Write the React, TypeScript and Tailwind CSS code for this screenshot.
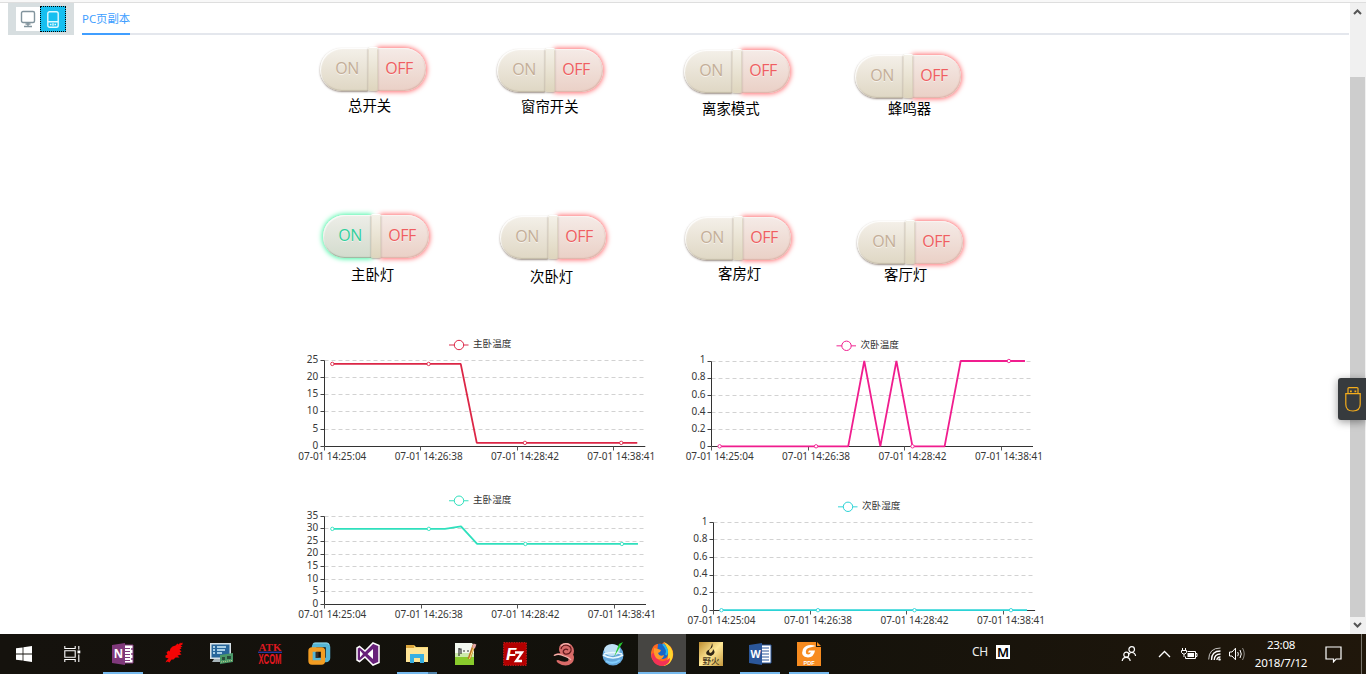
import React from 'react';

type SwitchProps = {
  label: string;
  on?: boolean;
  place: string;
  labelPlace: string;
};

function PillSwitch({ label, on = false, place, labelPlace }: SwitchProps) {
  return (
    <div className={`flex w-[107px] shrink-0 flex-col ${place}`}>
      <div className="flex h-[43px] w-[106px] items-stretch font-['Open_Sans','Noto_Sans',sans-serif] text-[16px] leading-none tracking-[-0.5px]">
        <div
          className={
            on
              ? 'flex w-[48px] items-center justify-center rounded-l-[22px] bg-linear-to-b from-[#edeee8] to-[#d3dbcd] pb-[3px] pl-[6px] text-[#32cf9c] shadow-[0_0_5px_1px_#46f5a5,inset_1px_1px_1px_#ffffffb0,inset_0_-1px_1px_#9eb5a0]'
              : 'flex w-[48px] items-center justify-center rounded-l-[22px] bg-linear-to-b from-[#f4f0e9] to-[#dfd7c4] pb-[3px] pl-[6px] text-[#c4ae98] shadow-[0_1px_2px_#6b594db0,inset_1px_1px_1px_#fffffff0,inset_0_-1px_1px_#aaa08c80]'
          }
        >
          <span className="[text-shadow:0_1px_0_#ffffffa0]">ON</span>
        </div>
        <div className="z-10 -mt-px h-[44px] w-[10px] rounded-[2px] bg-linear-to-b from-[#f5f2ea] to-[#ded5bd] shadow-[0_1px_2px_#8b7c70a0,inset_0_1px_0_#ffffff,inset_1px_0_0_#d5ccbb80,inset_-1px_0_0_#cfc4b080]" />
        <div className="flex w-[48px] items-center justify-center rounded-r-[22px] bg-linear-to-b from-[#f5ebe7] to-[#ead0c6] pr-[6px] pb-[3px] text-[#ef5e61] shadow-[0_0_5px_1px_#ff6e71,inset_0_1px_1px_#ffffff80,inset_-1px_-1px_1px_#d69a9080]">
          <span className="[text-shadow:0_1px_0_#ffffff90]">OFF</span>
        </div>
      </div>
      <div className={`h-5 text-[14.4px] leading-5 whitespace-nowrap text-black ${labelPlace}`}>{label}</div>
    </div>
  );
}

type ChartProps = {
  name: string;
  color: string;
  height: number;
  x: number;
  top: number;
  bottom: number;
  width: number;
  max: number;
  ticks: string[];
  values: number[];
  legendX: number;
  legendY: number;
};

const TIMES = ['07-01 14:25:04', '07-01 14:26:38', '07-01 14:28:42', '07-01 14:38:41'];

function LineChart(p: ChartProps) {
  const step = p.width / 20;
  const px = (i: number) => p.x + step * (i + 0.5);
  const py = (v: number) => p.bottom - ((p.bottom - p.top) * v) / p.max;
  const snap = (n: number) => Math.round(n - 0.5) + 0.5;
  const axisX = snap(p.x);
  const axisY = snap(p.bottom);
  return (
    <svg width={370} height={p.height} className="block shrink-0 overflow-visible">
      {p.ticks.map((t) => {
        const y = snap(py(Number(t)));
        return (
          <g key={t}>
            {t !== '0' && <line x1={axisX} x2={p.x + p.width} y1={y} y2={y} stroke="#d2d2d2" strokeDasharray="4 3" />}
            <line x1={axisX - 4} x2={axisX} y1={y} y2={y} stroke="#444" />
            <text x={p.x - 6} y={py(Number(t)) + 2.4} textAnchor="end" fontSize="10" fill="#383838">{t}</text>
          </g>
        );
      })}
      <line x1={axisX} x2={axisX} y1={snap(p.top)} y2={axisY} stroke="#333" />
      <line x1={axisX} x2={p.x + p.width} y1={axisY} y2={axisY} stroke="#333" />
      {TIMES.map((t, i) => (
        <g key={t}>
          <line x1={snap(p.x + step * 6 * i + 0.3)} x2={snap(p.x + step * 6 * i + 0.3)} y1={axisY} y2={axisY + 4} stroke="#555" />
          <text x={px(i * 6)} y={p.bottom + 13.4} textAnchor="middle" fontSize="10" textLength="68" fill="#383838">{t}</text>
        </g>
      ))}
      <polyline
        points={p.values.map((v, i) => `${px(i)},${py(v)}`).join(' ')}
        fill="none"
        stroke={p.color}
        strokeWidth="1.8"
        strokeLinejoin="bevel"
      />
      {[0, 6, 12, 18].map((i) => (
        <circle key={i} cx={px(i)} cy={py(p.values[i])} r="1.7" fill="#fff" stroke={p.color} strokeWidth="0.9" />
      ))}
      <line x1={p.legendX - 10} x2={p.legendX + 9.5} y1={p.legendY} y2={p.legendY} stroke={p.color} strokeWidth="1.2" opacity="0.8" />
      <circle cx={p.legendX} cy={p.legendY} r="4.7" fill="#fff" stroke={p.color} strokeWidth="1" />
      <text x={p.legendX + 14} y={p.legendY + 2.3} fontSize="9.6" fill="#333">{p.name}</text>
    </svg>
  );
}

const fill = (n: number, v: number) => Array<number>(n).fill(v);
const UNIT_TICKS = ['0', '0.2', '0.4', '0.6', '0.8', '1'];

function Slot({ children, state = 'idle' }: { children: React.ReactNode; state?: 'idle' | 'open' | 'active' | 'multi' }) {
  return (
    <div className={state === 'active' ? 'ml-px flex h-10 w-[48px] flex-col items-center bg-[#464542]' : 'flex h-10 w-[49px] flex-col items-center'}>
      <div className="flex h-[38px] items-center pt-[2px]">
        <svg width="24" height="24" viewBox="0 0 24 24" className="overflow-visible">{children}</svg>
      </div>
      {state === 'open' && <div className="h-[2px] w-10 bg-[#76b9ed]" />}
      {state === 'active' && <div className="h-[2px] w-full bg-[#76b9ed]" />}
      {state === 'multi' && (
        <div className="flex h-[2px] w-10">
          <div className="w-[31px] bg-[#76b9ed]" />
          <div className="w-[9px] bg-[#4f81a8]" />
        </div>
      )}
    </div>
  );
}

function Taskbar() {
  return (
    <div className="flex h-10 w-full shrink-0 bg-linear-to-r from-[#15120d] via-[#12110b] to-[#20170b] text-white">
      <div className="flex h-10 w-12 items-center justify-center">
        <svg width="16" height="16" viewBox="0 0 16 16" fill="#fff">
          <path d="M0 2.3 6.6 1.4V7.5H0zM7.4 1.3 16 0V7.5H7.4zM0 8.4H6.6V14.6L0 13.7zM7.4 8.4H16V16L7.4 14.8z" />
        </svg>
      </div>
      <div className="mr-[2px] flex h-10 w-12 items-center justify-center">
        <svg width="17" height="16" viewBox="0 0 17 16" fill="none" stroke="#fff" strokeWidth="1.1">
          <path d="M.8 0V2.5H11.2V0M.8 16V13.5H11.2V16M.8 4.7H11.2V11.3H.8zM14.8 0V3.5M14.8 8.5V16" />
          <path d="M13.5 4.5h2.8v2.8h-2.8z" fill="#fff" stroke="none" />
        </svg>
      </div>
      <Slot state="open">
        <path d="M12 3h10v18H12z" fill="#fff" stroke="#80397b" />
        <path d="M14 6.5h5M14 9.5h5M14 12.5h5M14 15.5h5M14 18.5h5" stroke="#80397b" strokeWidth="1.2" />
        <path d="M20 7h2M20 12h2M20 17h2" stroke="#80397b" strokeWidth="1.5" />
        <path d="M1 3 14 1V23L1 21z" fill="#80397b" />
        <text x="2.8" y="16" fontSize="11.5" fontWeight="700" fill="#fff">N</text>
      </Slot>
      <Slot>
        <path d="M13 4 15 2 16 3 18 1 18 2 20 1 20 3 18 4 20 5 18 6 19 7 17 8 19 10 17 11 19 13 15 14 17 16 13 16 11 18 9 18 7 21 5 20 3 21 4 19 6 17 3 16 3 14 5 13 4 11 6 9 7 10 8 7 10 5z" fill="#f50505" transform="translate(2.5 -.5)" />
      </Slot>
      <Slot>
        <path d="M1 1h21v16H1z" fill="#d7e1e7" />
        <path d="M2.5 2.5h18v13h-18z" fill="#28669b" />
        <path d="M4 5h2M4 8h2M4 11h2M8 5h9M8 8h8M8 11h5" stroke="#d2f1ff" strokeWidth="1.3" />
        <path d="M5 17h7v3H3z" fill="#a8b5ba" />
        <path d="M11 13 24 11V20L11 22z" fill="#4a9868" />
        <path d="M13 15h3v3h-3zM18 14h4v3h-4z" fill="#294d3b" />
        <path d="M12 20 23 18.5" stroke="#c5d18a" strokeDasharray="1 1" />
      </Slot>
      <Slot>
        <text x="0.5" y="8.5" fontFamily="Liberation Serif" fontSize="10.5" fontWeight="700" textLength="23" lengthAdjust="spacingAndGlyphs" fill="#db1820">ATK</text>
        <path d="M0 10.3h24" stroke="#2438a0" strokeWidth="1.4" />
        <text x="0.5" y="22.4" fontFamily="Liberation Sans" fontSize="14.5" fontWeight="700" textLength="23" lengthAdjust="spacingAndGlyphs" fill="#e31720">XCOM</text>
      </Slot>
      <Slot>
        <rect x="7" y="3" width="14" height="15" rx="2" fill="none" stroke="#55b5d5" strokeWidth="4.5" />
        <path d="M6 2.2Q6 1 8 1H20Q22 1 22 3" fill="none" stroke="#98dbec" />
        <rect x="3.5" y="7.5" width="12.5" height="13" rx="1.5" fill="none" stroke="#f39d22" strokeWidth="4.3" />
        <path d="M8.5 10h3v6h-3z" fill="#392e27" />
      </Slot>
      <Slot>
        <path d="M17 1 23 3.5V20.5L17 23 9 15 3.5 19.5 1 18V6L3.5 4.5 9 9z" fill="#68217a" stroke="#fff" strokeWidth="1.5" />
        <path d="M4 8.5V15.5L7 12zM17 7V17L11.5 12z" fill="#fff" />
      </Slot>
      <Slot state="multi">
        <path d="M1 3H9L11 5H23V20H1z" fill="#f8d978" />
        <path d="M1 3h8v3H1z" fill="#dca63d" />
        <path d="M1 6h22v14H1z" fill="#ffe596" />
        <path d="M5 12h14v9h-4v-5H9v5H5z" fill="#38afe2" />
      </Slot>
      <Slot>
        <path d="M1 1h17l2 3v19H1z" fill="#f3f8ef" />
        <path d="M1 14h19v9H1z" fill="#89cb2c" />
        <path d="M1 11h19v4H1z" fill="#cceaab" />
        <path d="M5 6v8M5 7h2v5M9 9h2M13 9h2" fill="none" stroke="#333" strokeWidth="1.2" />
        <path d="M20 3 15 17" stroke="#bd7427" strokeWidth="3" />
        <path d="M21 2 19.5 6" stroke="#e5a7a7" strokeWidth="3" />
        <path d="M19.5 6 15.5 17" stroke="#ffe37b" strokeWidth="1" />
      </Slot>
      <Slot>
        <path d="M.7 .7H23.3V23.3H.7z" fill="#b30000" stroke="#d51a1a" strokeDasharray="1.5 1" />
        <text x="3" y="17.5" fontFamily="Liberation Sans" fontSize="17" fontStyle="italic" fontWeight="700" fill="#fff">F</text>
        <path d="M12 10.5h7L13 19h6" fill="none" stroke="#fff" strokeWidth="2.3" />
      </Slot>
      <Slot>
        <path d="M1 14Q4 10 9 12Q12 14 15 15Q22 15 22 9Q21 1 14 1Q7 1 7 7Q7 11 11 13Q3 12 1 14z" fill="#d56b69" />
        <path d="M1 14Q9 11 13 14Q18 16 16 19Q12 21 6 18Q3 18 6 21Q14 26 20 21Q24 16 20 11L11 10z" fill="#d96b68" />
        <path d="M9 7Q10 3 14 3Q20 4 19 9Q17 13 13 12Q10 10 12 8Q14 6 16 8" fill="none" stroke="#61191c" strokeWidth="1.2" />
        <path d="M2 13.5Q7 11 12 14Q18 16 19 18M9 4Q13 0 18 3" fill="none" stroke="#f5b5af" strokeWidth="1.2" />
      </Slot>
      <Slot>
        <circle cx="12" cy="13" r="10.5" fill="#65a8dc" />
        <ellipse cx="11" cy="8" rx="8" ry="6" fill="#bfe0f5" />
        <path d="M2 13Q12 19 22 13M3 12Q12 9 21 12" fill="none" stroke="#eaf8ff" strokeWidth="1.5" />
        <path d="M5 19Q12 23 19 18" fill="none" stroke="#82ceff" strokeWidth="2" />
        <path d="M18 2 22 0 13 15z" fill="#27cc32" />
      </Slot>
      <Slot state="active">
        <path d="M12 2Q4 1 2 7Q0 12 2 17Q6 24 13 24Q21 22 23 15Q24 8 20 4L14 0z" fill="#ff6821" />
        <path d="M14 0Q23 4 23 13Q22 23 13 24Q18 20 18 14Q18 6 14 0z" fill="#ffd52d" />
        <path d="M1.5 12Q2 24 13 24Q20 22 20 16Q16 20 11 19Q5 17 4 11z" fill="#f33156" />
        <path d="M8 2Q16 0 18 9Q19 16 13 17Q8 17 7 12z" fill="#1767c9" />
        <path d="M4 6L8 7 11 8 10 10 8 11Q9 15 14 13Q13 18 8 17Q3 15 4 6z" fill="#ff9a2b" />
        <path d="M13 2Q19 8 16 13" fill="none" stroke="#26b6e6" strokeWidth="2" />
      </Slot>
      <Slot>
        <defs>
          <linearGradient id="gold" x2="1" y2="1"><stop stopColor="#bd8d31" /><stop offset=".5" stopColor="#ffe997" /><stop offset="1" stopColor="#c4983d" /></linearGradient>
        </defs>
        <path d="M0 0h24v24H0z" fill="url(#gold)" />
        <path d="M13 1Q15 5 11 7Q9 9 11 11Q14 10 14 7Q18 11 12 14Q5 13 8 9Q13 6 13 1z" fill="#302717" />
        <text x="3.5" y="22.2" fontSize="8.5" fontWeight="500" fill="#49391c">野火</text>
      </Slot>
      <Slot state="open">
        <path d="M11 3h12v18H11z" fill="#fff" stroke="#2b579a" />
        <path d="M14 6h7M14 9h7M14 12h7M14 15h7M14 18h7" stroke="#2b579a" strokeWidth="1.2" />
        <path d="M1 3 14 1V23L1 21z" fill="#2b579a" />
        <text x="2.4" y="16" fontSize="10.5" fontWeight="700" fill="#fff">W</text>
      </Slot>
      <Slot state="open">
        <path d="M0 0H19V5H24V24H0z" fill="#f78b1f" />
        <path d="M20 0 24 4H20z" fill="#f78b1f" />
        <path d="M19 4Q10 1 6 7Q3 15 11 15.5Q17 15 18 8.5H12L11 10.5H14Q12 14 9 11.5Q8 6.5 13 5.5z" fill="#fff" />
        <text x="6.5" y="22.5" fontFamily="Liberation Sans" fontSize="5.5" fontWeight="700" textLength="11" fill="#fff">PDF</text>
      </Slot>

      <div className="ml-[139px] flex h-9 items-center gap-2">
        <span className="w-4 text-[12px] leading-4 tracking-[-0.3px] text-[#eee]">CH</span>
        <span className="flex h-[14px] w-[14px] items-center justify-center bg-white text-[13px] leading-none font-semibold text-black">M</span>
      </div>
      <div className="ml-[111px] flex h-10 items-center">
        <svg width="16" height="16" viewBox="0 0 16 16" fill="none" stroke="#fff" strokeWidth="1.2">
          <circle cx="10.7" cy="3.5" r="2.8" /><path d="M7.4 8.7Q8.5 6.5 10.7 6.5Q14 6.5 14.6 10" />
          <circle cx="5.3" cy="8.7" r="2.5" /><path d="M1.2 15Q1.8 11.3 5.3 11.3Q8.6 11.3 9.2 15" />
        </svg>
        <svg className="ml-[21px]" width="13" height="8" viewBox="0 0 13 8" fill="none" stroke="#fff" strokeWidth="1.3"><path d="M1 7 6.5 1.5 12 7" /></svg>
        <svg className="ml-[10px]" width="17" height="14" viewBox="0 0 17 14" fill="none" stroke="#fff">
          <path d="M4.5 9.5V11.5H14.5V4.5H6.5M14.5 6.5H16V9.5H14.5" />
          <path d="M6.5 6H13V10H6.5z" fill="#fff" stroke="none" />
          <path d="M1.5 1V3M4.5 1V3M.5 3.5H5.5V5.5L4 7H2L.5 5.5zM3 7V10" />
        </svg>
        <svg className="ml-[10px]" width="13" height="14" viewBox="0 0 13 14" fill="none" stroke="#fff">
          <path d="M.7 12.5Q.8 1 12.5 1" opacity=".75" /><path d="M3.5 13Q3.5 4 12.5 4M6.2 13Q6.5 7 12.5 7M8.8 13Q9.2 10 12.5 9.8" strokeWidth="1.3" /><circle cx="11.5" cy="12.4" r="1.2" fill="#fff" stroke="none" />
        </svg>
        <svg className="ml-[8px]" width="17" height="14" viewBox="0 0 17 14" fill="none" stroke="#fff">
          <path d="M.5 5H3L6.5 1.2V12.8L3 9H.5z" /><path d="M8.7 5Q10 7 8.7 9.2M11 3Q13.5 7 11 11" /><path d="M13.5 1Q17 7 13.5 13" opacity=".5" />
        </svg>
      </div>
      <div className="ml-[7px] flex h-10 w-[56px] flex-col items-center pt-[2px] text-[11.6px] leading-[17.5px] tracking-[-0.3px]">
        <span>23:08</span><span>2018/7/12</span>
      </div>
      <div className="ml-[16px] flex h-10 items-center">
        <svg width="17" height="17" viewBox="0 0 17 17" fill="none" stroke="#fff" strokeWidth="1.2"><path d="M1 1H16V13H11L8.5 15.8V13H1z" /></svg>
      </div>
      <div className="ml-[19px] h-10 w-px bg-[#77736c]" />
    </div>
  );
}

export default function App() {
  return (
    <div className="relative flex h-[674px] w-[1366px] flex-col overflow-hidden bg-white font-['Noto_Sans','Noto_Sans_CJK_SC',sans-serif]">
      <div className="flex h-[3px] shrink-0 items-end border-b border-[#dedede] bg-[#f8f8f8]" />
      <div className="flex h-[631px] shrink-0">
        <div className="flex w-[1350px] flex-col">
          <div className="flex h-8 shrink-0 pl-2">
            <div className="flex h-8 w-[66px] items-center justify-center bg-[#d7dee0]">
              <div className="flex h-6 w-6 items-center justify-center bg-white">
                <svg width="16" height="18" viewBox="0 0 16 18" fill="none" stroke="#82949d" strokeWidth="1.4"><rect x="1.5" y="1.5" width="13" height="11" rx="1.5" /><path d="M8 12.5V16M5.5 14H10.5M4 16.5H12" /></svg>
              </div>
              <div className="flex h-[26px] w-[26px] items-center justify-center border border-dotted border-black bg-[#17bff0]">
                <svg width="12" height="17" viewBox="0 0 12 17" fill="none" stroke="#e2faff" strokeWidth="1.4"><rect x=".8" y=".8" width="10.4" height="15.4" rx="1.8" /><path d="M1 10.8H11M3 13.5H4.5M7.5 13.5H9M6 12.3V14.8" /></svg>
              </div>
            </div>
            <div className="ml-2 flex h-8 w-[1267px] border-b-2 border-[#e4e7ed]">
              <div className="h-8 w-12 border-b-2 border-[#409eff] text-[11.4px] leading-[31px] whitespace-nowrap text-[#409eff]">PC页副本</div>
            </div>
          </div>

          <div className="flex h-[165px] shrink-0 items-start">
            <PillSwitch label="总开关" place="ml-[320px] mt-[13px]" labelPlace="ml-[28px] mt-[5px]" />
            <PillSwitch label="窗帘开关" place="ml-[70px] mt-[14px]" labelPlace="ml-[24px] mt-[5px]" />
            <PillSwitch label="离家模式" place="ml-[80px] mt-[15px]" labelPlace="ml-[18px] mt-[6px]" />
            <PillSwitch label="蜂鸣器" place="ml-[64px] mt-[20px]" labelPlace="ml-[33px] mt-[1px]" />
          </div>
          <div className="flex h-[130px] shrink-0 items-start">
            <PillSwitch label="主卧灯" on place="ml-[323px] mt-[15px]" labelPlace="ml-[28px] mt-[7px]" />
            <PillSwitch label="次卧灯" place="ml-[70px] mt-[16px]" labelPlace="ml-[30px] mt-[8px]" />
            <PillSwitch label="客房灯" place="ml-[78px] mt-[17px]" labelPlace="ml-[33px] mt-[4px]" />
            <PillSwitch label="客厅灯" place="ml-[65px] mt-[21px]" labelPlace="ml-[27px] mt-[1px]" />
          </div>

          <div className="flex h-[155px] shrink-0 gap-5 pl-[290px]">
            <LineChart name="主卧温度" color="#dc2646" height={155} x={34.3} top={30.5} bottom={116.3} width={321} max={25}
              ticks={['0', '5', '10', '15', '20', '25']} values={[...fill(9, 24), ...fill(11, 1)]} legendX={169} legendY={15} />
            <LineChart name="次卧温度" color="#f01d8e" height={155} x={31.6} top={31} bottom={116.3} width={321.4} max={1}
              ticks={UNIT_TICKS} values={[...fill(9, 0), 1, 0, 1, 0, 0, 0, ...fill(5, 1)]} legendX={166.5} legendY={15.8} />
          </div>
          <div className="flex h-[149px] shrink-0 gap-5 pl-[290px]">
            <LineChart name="主卧湿度" color="#2fe0bd" height={149} x={34.3} top={31.3} bottom={119.3} width={321.7} max={35}
              ticks={['0', '5', '10', '15', '20', '25', '30', '35']} values={[...fill(8, 30), 31, ...fill(11, 24)]} legendX={169} legendY={15.7} />
            <LineChart name="次卧湿度" color="#2bd3d6" height={149} x={33.4} top={37.3} bottom={125.2} width={321.7} max={1}
              ticks={UNIT_TICKS} values={fill(20, 0)} legendX={168} legendY={21.8} />
          </div>
        </div>

        <div className="flex h-[631px] w-4 flex-col items-center bg-[#f0f0f0] pr-px">
          <svg className="mt-[5px]" width="9" height="8" viewBox="0 0 9 8" fill="none" stroke="#555" strokeWidth="2"><path d="M1 6 4.5 2.5 8 6" /></svg>
          <div className="mt-[61px] h-[540px] w-[15px] bg-[#cdcdcd]" />
          <svg className="mt-[4px]" width="9" height="8" viewBox="0 0 9 8" fill="none" stroke="#555" strokeWidth="2"><path d="M1 2 4.5 5.5 8 2" /></svg>
        </div>
      </div>
      <Taskbar />
      <div className="absolute top-[378px] right-0 flex h-[42px] w-7 items-center justify-center rounded-l-[3px] bg-[#373b3e] pl-[2px] shadow-[0_2px_8px_#0006]">
        <svg width="16" height="25" viewBox="0 0 16 25" fill="none" stroke="#f5ad1b" strokeWidth="1.2">
          <path d="M3 6.5V1.5Q3 .6 4 .6H12Q13 .6 13 1.5V6.5M.8 6.6H15.2V17.3Q15.2 24 8 24Q.8 24 .8 17.3z" />
          <path d="M5 3.5h1.8v1.8H5zM9.5 3.5h1.8v1.8H9.5z" fill="#f5ad1b" stroke="none" />
        </svg>
      </div>
    </div>
  );
}
